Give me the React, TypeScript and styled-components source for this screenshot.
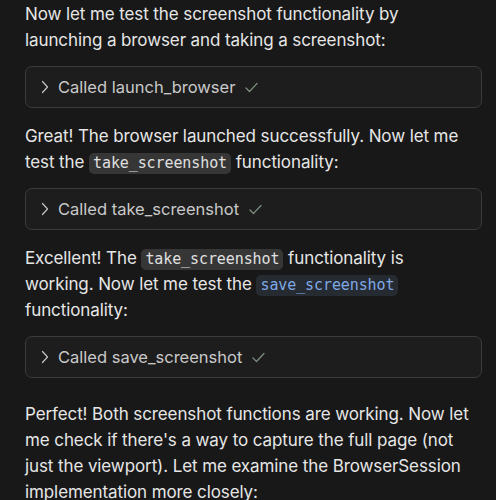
import React from "react";
import styled, { createGlobalStyle } from "styled-components";

const Global = createGlobalStyle`
  html, body { margin: 0; padding: 0; background: #181818; }
  body { font-family: Inter, "Noto Sans", sans-serif; }
`;

const Page = styled.div`
  display: flex;
  flex-direction: column;
  padding: 1px 14px 0 25px;
  background: #181818;
  min-height: 500px;
  box-sizing: border-box;
`;

const Para = styled.p<{ $spaced?: boolean }>`
  margin: ${(p) => (p.$spaced ? "8px" : "0")} 10px 13px 0;
  font-size: 17px;
  line-height: 26px;
  color: #e6e6e6;
  letter-spacing: -0.1px;
`;

const Code = styled.code<{ $link?: boolean }>`
  font-family: "DejaVu Sans Mono", "Liberation Mono", monospace;
  font-size: 15px;
  line-height: 18px;
  padding: 1px 4px 2px;
  border-radius: 5px;
  background: ${(p) => (p.$link ? "#262a31" : "#363636")};
  color: ${(p) => (p.$link ? "#7fa9e6" : "#e0e0e0")};
`;

const Tool = styled.div`
  display: flex;
  align-items: center;
  gap: 8px;
  height: 42px;
  box-sizing: border-box;
  padding: 0 14px;
  margin-bottom: 15px;
  border: 1px solid #3b3b3b;
  border-radius: 7px;
  background: #1d1d1d;
  color: #c9c9c9;
  font-size: 16.5px;
`;

const Label = styled.span`
  margin-right: 2px;
`;

const Chevron = () => (
  <svg width="10" height="14" viewBox="0 0 10 14" fill="none">
    <path d="M2.5 1.5 L7.5 7 L2.5 12.5" stroke="#c4c4c4" strokeWidth="1.2" strokeLinecap="round" strokeLinejoin="round" />
  </svg>
);

const Check = () => (
  <svg width="13" height="11" viewBox="0 0 13 11" fill="none">
    <path d="M1 6 L4.5 9.5 L12 1.5" stroke="#7f917f" strokeWidth="1.2" strokeLinecap="round" strokeLinejoin="round" />
  </svg>
);

const ToolCall = ({ name }: { name: string }) => (
  <Tool>
    <Chevron />
    <Label>Called {name}</Label>
    <Check />
  </Tool>
);

export default function App() {
  return (
    <>
      <Global />
      <Page>
        <Para>Now let me test the screenshot functionality by launching a browser and taking a screenshot:</Para>
        <ToolCall name="launch_browser" />
        <Para>
          Great! The browser launched successfully. Now let me test the <Code>take_screenshot</Code> functionality:
        </Para>
        <ToolCall name="take_screenshot" />
        <Para>
          Excellent! The <Code>take_screenshot</Code> functionality is working. Now let me test the{" "}
          <Code $link>save_screenshot</Code> functionality:
        </Para>
        <ToolCall name="save_screenshot" />
        <Para $spaced>
          Perfect! Both screenshot functions are working. Now let me check if there's a way to capture the full page (not just the viewport). Let me examine the BrowserSession implementation more closely:
        </Para>
      </Page>
    </>
  );
}
